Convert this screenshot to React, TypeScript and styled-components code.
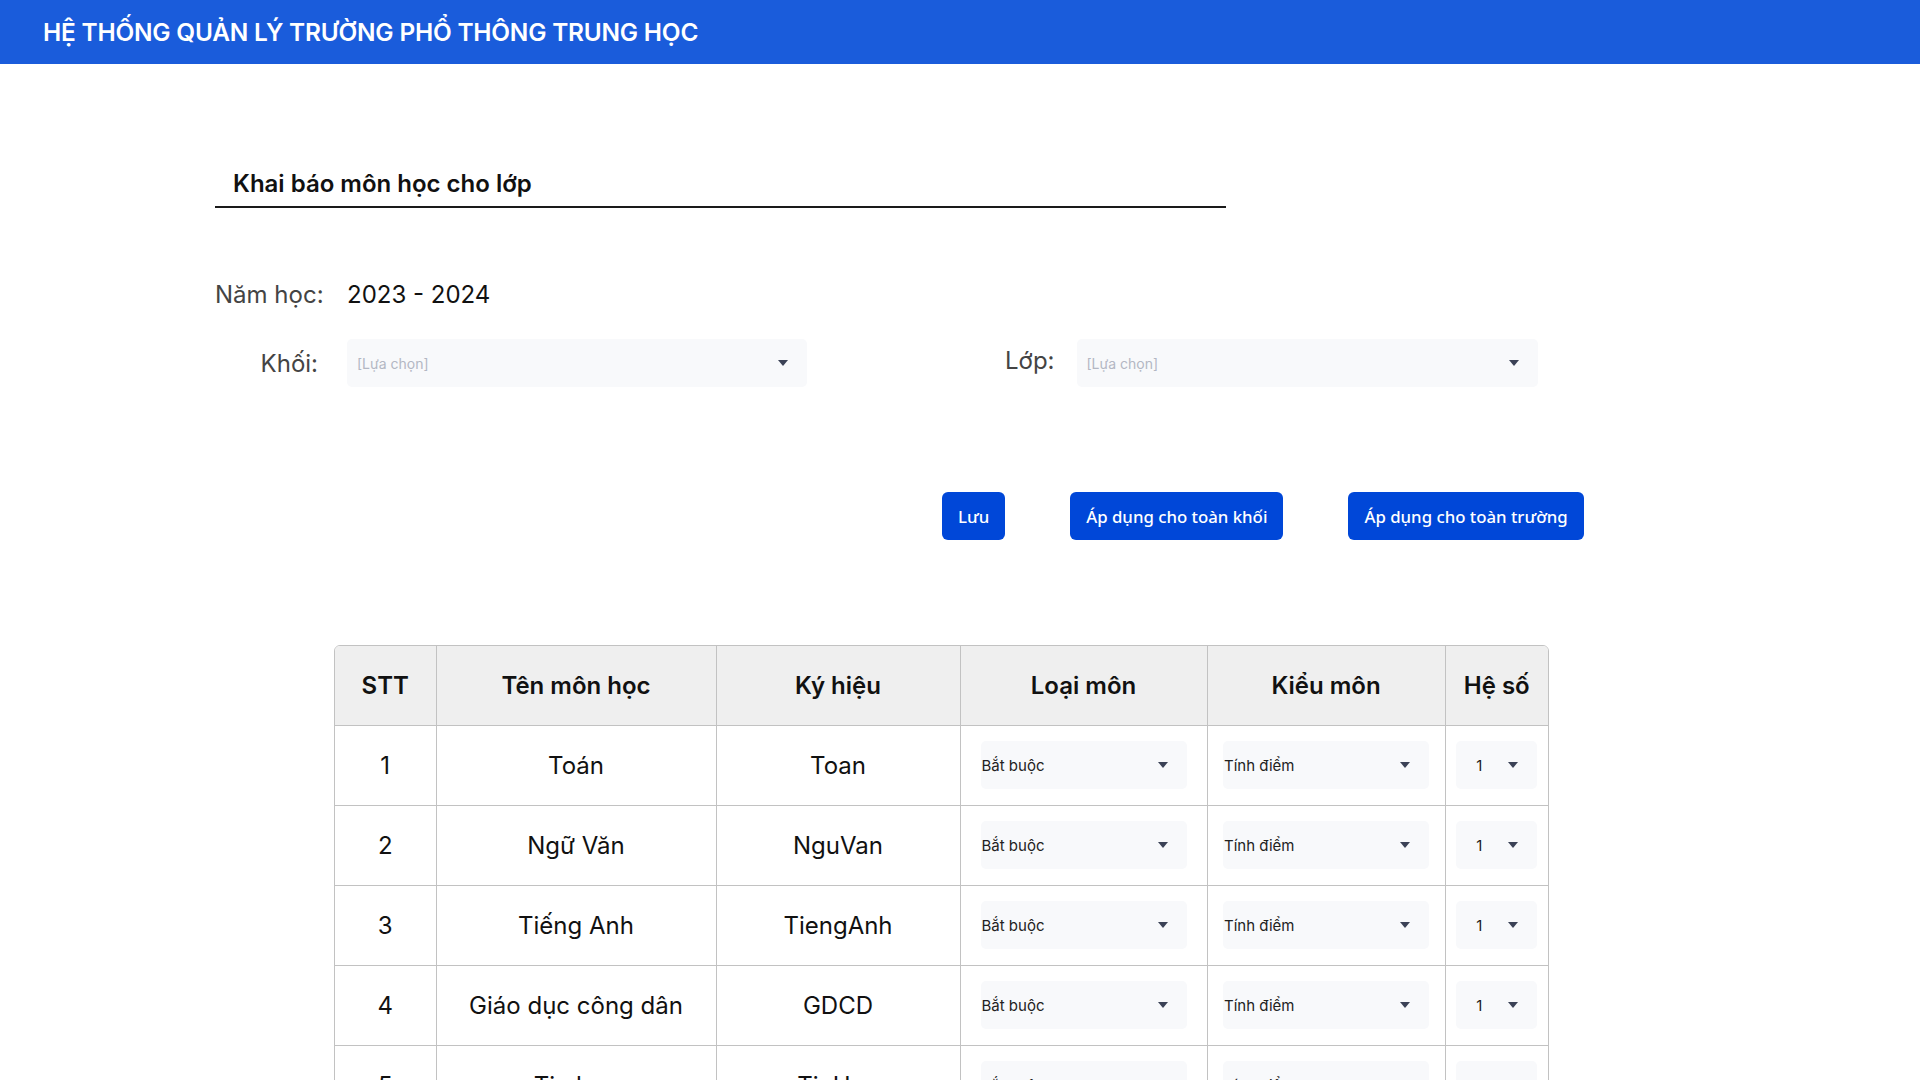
import React from 'react';
import styled, { createGlobalStyle } from 'styled-components';

const GlobalStyle = createGlobalStyle`
  body {
    margin: 0;
    background: #ffffff;
    font-family: Inter, "Noto Sans", "Liberation Sans", sans-serif;
    color: #111;
  }
`;

const SUBJECTS = [
  { id: 1, name: 'Toán', code: 'Toan' },
  { id: 2, name: 'Ngữ Văn', code: 'NguVan' },
  { id: 3, name: 'Tiếng Anh', code: 'TiengAnh' },
  { id: 4, name: 'Giáo dục công dân', code: 'GDCD' },
  { id: 5, name: 'Tin học', code: 'TinHoc' },
  { id: 6, name: 'Vật lý', code: 'VatLy' },
  { id: 7, name: 'Hóa học', code: 'HoaHoc' },
];

const TopBar = styled.header`
  height: 64px;
  background: #1a5cdb;
  display: flex;
  align-items: center;
  padding-left: 43px;
`;

const AppTitle = styled.h1`
  margin: 0;
  color: #fff;
  font-size: 24.4px;
  font-weight: 600;
  letter-spacing: -0.2px;
`;

const Main = styled.main`
  padding: 104px 0 0 215px;
`;

const SectionTitle = styled.h2`
  width: 993px;
  margin: 0;
  padding: 0 0 6px 18px;
  border-bottom: 2px solid #1a1a1a;
  font-size: 24px;
  line-height: 32px;
  font-weight: 600;
  color: #111;
`;

const YearRow = styled.div`
  display: flex;
  align-items: center;
  margin-top: 71px;
  line-height: 32px;
  font-size: 24px;
`;

const Label = styled.span<{ $width?: number }>`
  width: ${p => (p.$width ? `${p.$width}px` : 'auto')};
  text-align: right;
  color: #444;
  font-size: 24px;
  font-weight: 400;
  flex-shrink: 0;
`;

const YearLabel = styled(Label)`
  text-align: left;
`;

const Value = styled.span`
  margin-left: 22px;
  color: #111;
`;

const FilterRow = styled.div`
  display: flex;
  align-items: center;
  margin-top: 28px;
`;

const FilterGroup = styled.div<{ $offset?: number; $gap: number }>`
  display: flex;
  align-items: center;
  gap: ${p => p.$gap}px;
  margin-left: ${p => p.$offset || 0}px;
`;

const SelectBox = styled.div<{ $width: number; $padLeft: number }>`
  width: ${p => p.$width}px;
  height: 48px;
  box-sizing: border-box;
  background: #f8f9fb;
  border-radius: 5px;
  display: flex;
  align-items: center;
  justify-content: space-between;
  padding: 0 19px 0 ${p => p.$padLeft}px;
  font-size: 15px;
  color: #222;
`;

const Placeholder = styled.span`
  color: #b3b7c3;
  font-size: 14px;
`;

const ButtonRow = styled.div`
  display: flex;
  gap: 65px;
  margin-top: 105px;
  padding-left: 727px;
`;

const Button = styled.button`
  height: 48px;
  padding: 0 16px;
  border: none;
  border-radius: 6px;
  background: #0047d8;
  color: #fff;
  font-family: "Noto Sans", Inter, sans-serif;
  font-size: 16.8px;
  font-weight: 500;
  cursor: pointer;
`;

const TableWrap = styled.div`
  margin: 105px 0 0 119px;
  width: 1213px;
  border: 1px solid #c2c2c2;
  border-radius: 6px;
  overflow: hidden;
`;

const Table = styled.table`
  width: 1213px;
  border-collapse: collapse;
  table-layout: fixed;
`;

const Col = styled.col<{ $width: number }>`
  width: ${p => p.$width}px;
`;

const HeadCell = styled.th`
  padding: 0;
  height: 79px;
  box-sizing: border-box;
  background: #efefef;
  font-size: 24px;
  font-weight: 600;
  color: #111;
  border-right: 1px solid #c2c2c2;
  border-bottom: 1px solid #c2c2c2;
  &:last-child { border-right: none; }
`;

const Cell = styled.td`
  padding: 0;
  height: 79px;
  text-align: center;
  font-size: 24px;
  color: #111;
  border-right: 1px solid #c2c2c2;
  border-bottom: 1px solid #c2c2c2;
  &:last-child { border-right: none; }
  ${SelectBox} { margin: 0 auto; }
`;

function Caret() {
  return (
    <svg width="10" height="6" viewBox="0 0 10 6">
      <path d="M0 0h10L5 6z" fill="#3b4256" />
    </svg>
  );
}

function Dropdown(props: { width: number; padLeft: number; children: React.ReactNode }) {
  const { width, padLeft, children } = props;
  return (
    <SelectBox $width={width} $padLeft={padLeft}>
      {children}
      <Caret />
    </SelectBox>
  );
}

export default function App() {
  return (
    <>
      <GlobalStyle />
      <TopBar>
        <AppTitle>HỆ THỐNG QUẢN LÝ TRƯỜNG PHỔ THÔNG TRUNG HỌC</AppTitle>
      </TopBar>
      <Main>
        <SectionTitle>Khai báo môn học cho lớp</SectionTitle>

        <YearRow>
          <YearLabel $width={110}>Năm học:</YearLabel>
          <Value>2023 - 2024</Value>
        </YearRow>

        <FilterRow>
          <FilterGroup $gap={29}>
            <Label $width={103}>Khối:</Label>
            <Dropdown width={460} padLeft={10}>
              <Placeholder>[Lựa chọn]</Placeholder>
            </Dropdown>
          </FilterGroup>
          <FilterGroup $gap={22} $offset={198}>
            <Label style={{ marginTop: -5 }}>Lớp:</Label>
            <Dropdown width={461} padLeft={10}>
              <Placeholder>[Lựa chọn]</Placeholder>
            </Dropdown>
          </FilterGroup>
        </FilterRow>

        <ButtonRow>
          <Button>Lưu</Button>
          <Button>Áp dụng cho toàn khối</Button>
          <Button>Áp dụng cho toàn trường</Button>
        </ButtonRow>

        <TableWrap>
          <Table>
            <colgroup>
              <Col $width={101} />
              <Col $width={280} />
              <Col $width={244} />
              <Col $width={247} />
              <Col $width={238} />
              <Col $width={103} />
            </colgroup>
            <thead>
              <tr>
                <HeadCell>STT</HeadCell>
                <HeadCell>Tên môn học</HeadCell>
                <HeadCell>Ký hiệu</HeadCell>
                <HeadCell>Loại môn</HeadCell>
                <HeadCell>Kiểu môn</HeadCell>
                <HeadCell>Hệ số</HeadCell>
              </tr>
            </thead>
            <tbody>
              {SUBJECTS.map(s => (
                <tr key={s.id}>
                  <Cell>{s.id}</Cell>
                  <Cell>{s.name}</Cell>
                  <Cell>{s.code}</Cell>
                  <Cell>
                    <Dropdown width={206} padLeft={1}>Bắt buộc</Dropdown>
                  </Cell>
                  <Cell>
                    <Dropdown width={206} padLeft={1}>Tính điểm</Dropdown>
                  </Cell>
                  <Cell>
                    <Dropdown width={81} padLeft={20}>1</Dropdown>
                  </Cell>
                </tr>
              ))}
            </tbody>
          </Table>
        </TableWrap>
      </Main>
    </>
  );
}
